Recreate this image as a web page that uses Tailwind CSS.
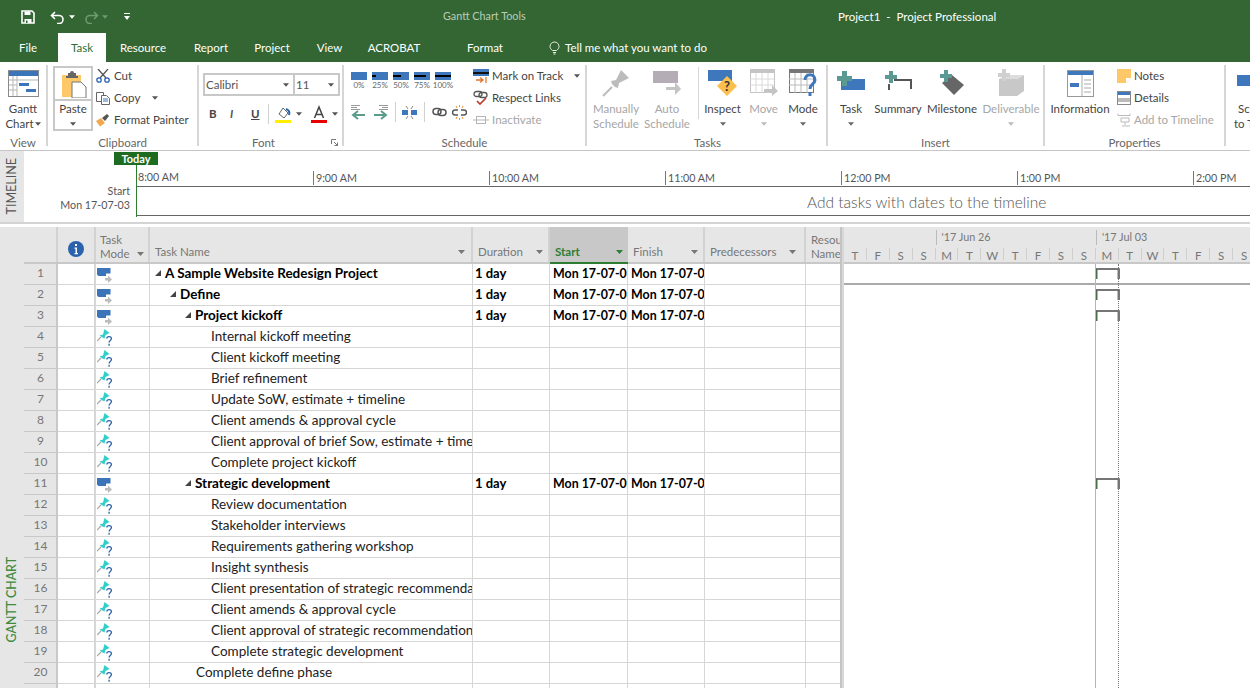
<!DOCTYPE html>
<html lang="en">
<head>
    <meta charset="UTF-8">
    <title>Project1 - Project Professional</title>
    <script src="https://cdn.jsdelivr.net/npm/@tailwindcss/browser@4"></script>
</head>
<body class="w-[1250px] h-[688px] overflow-hidden bg-white text-[#444] text-[11.500px] [font-family:Lato,'Liberation_Sans',sans-serif]">

    <!-- shared icons -->
    <svg class="hidden">
        <symbol id="caret" viewBox="0 0 7 4"><path d="M0 0h7L3.500 4z"/></symbol>
        <symbol id="auto-mode" viewBox="0 0 16 15"><path d="M0 0h13.500v5.500H9V8H1.500L0 6.500z" fill="#3b74b8"/><path d="M8 10h3V7.500l4 4-4 3.500v-2.500H8z" fill="#bcbcbc"/></symbol>
        <symbol id="pin-mode" viewBox="0 0 16 17"><path d="M0 12l4-4" stroke="#a8a8a8" stroke-width="1.200" fill="none"/><path d="M2.500 6.500L6 5.500 7.500 0l5 4-4 2-1 3.500-2-1z" fill="#2fd0cc"/><path d="M9.800 9.500c0-2.600 4.600-2.600 4.600 0 0 2-2.300 1.900-2.300 4" stroke="#fff" stroke-width="3" fill="none"/><path d="M9.800 9.500c0-2.600 4.600-2.600 4.600 0 0 2-2.300 1.900-2.300 4M12.100 14.800v2" stroke="#2b62ad" stroke-width="1.300" fill="none"/></symbol>
        <symbol id="tri" viewBox="0 0 6 6"><path d="M6 0v6H0z" fill="#444"/></symbol>
        <symbol id="bracket" viewBox="0 0 25 12"><path d="M1 11V1h23v10" fill="none" stroke="#4a4a4a" stroke-width="1.500"/><path d="M0 2h2.500v9H0z" fill="#4d6e4d"/><path d="M22.500 2H25v9h-2.500z" fill="#777"/></symbol>
    </svg>

    <!-- title bar + tabs -->
    <header class="h-[62px] bg-[#336633] text-white relative">
        <div class="h-[33px] flex items-center">
            <div class="flex items-center w-[440px] pl-[21px] gap-[3px]">
                <svg class="w-[14px] h-[14px]" viewBox="0 0 14 14"><path d="M1 1h10l2 2v10H1z" fill="none" stroke="#fff" stroke-width="1.600"/><path d="M3.500 1.500h6V5h-6zM3.500 9h7v4h-7z" fill="#fff"/><path d="M5 10.500h1.500V13H5z" fill="#336633"/></svg>
                <svg class="w-[16px] h-[14px] ml-[12px]" viewBox="0 0 16 14"><path d="M5 2L1.500 5.500 5 9M2 5.500h7a4 4 0 0 1 0 8H7" fill="none" stroke="#fff" stroke-width="1.600"/></svg>
                <svg class="w-[6px] h-[4px] fill-white"><use href="#caret"/></svg>
                <svg class="w-[16px] h-[14px] ml-[5px]" viewBox="0 0 16 14"><path d="M11 2l3.500 3.500L11 9M14 5.500H7a4 4 0 0 0 0 8h2" fill="none" stroke="#6f9a6f" stroke-width="1.600"/></svg>
                <svg class="w-[6px] h-[4px] fill-[#6f9a6f]"><use href="#caret"/></svg>
                <svg class="w-[6px] h-[8px] ml-[13px]" viewBox="0 0 6 8"><path d="M0 0h6v1H0zM0 3h6L3 7z" fill="#fff"/></svg>
            </div>
            <span class="text-[10.800px] text-[#b9ccb9] ml-[3px] w-[395px]">Gantt Chart Tools</span>
            <span class="text-[11.500px]">Project1&nbsp; -&nbsp; Project Professional</span>
        </div>
        <nav class="h-[29px] flex items-stretch text-[11.500px]">
            <a class="w-[58px] pl-[19px] leading-[30px]">File</a>
            <a class="w-[48px] text-center bg-white text-[#2f6e33] leading-[30px]">Task</a>
            <a class="w-[74px] text-center leading-[30px]">Resource</a>
            <a class="w-[62px] text-center leading-[30px]">Report</a>
            <a class="w-[60px] text-center leading-[30px]">Project</a>
            <a class="w-[55px] text-center leading-[30px]">View</a>
            <a class="w-[64px] ml-[5px] text-center leading-[30px]">ACROBAT</a>
            <a class="w-[41px] text-center leading-[30px]"></a>
            <a class="w-[36px] text-center leading-[30px]">Format</a>
            <div class="ml-[46px] flex items-center gap-[5px]">
                <svg class="w-[11px] h-[14px]" viewBox="0 0 11 14"><path d="M3.500 9.500C2 8.500 1 7 1 5.500a4.500 4.500 0 0 1 9 0c0 1.500-1 3-2.500 4zM4 11.500h3M4.500 13h2" fill="none" stroke="#e8f0e8"/></svg>
                <span>Tell me what you want to do</span>
            </div>
        </nav>
    </header>

    <!-- ribbon -->
    <section class="h-[89px] flex border-b border-[#c6c6c6]">

        <!-- View -->
        <div class="w-[48px] mt-[3px] mb-[4px] border-r-2 border-[#d6d6d6]">
            <div class="h-[70px] flex flex-col items-center">
                <div class="h-[36px] flex items-center">
                    <svg class="w-[31px] h-[27px]" viewBox="0 0 31 27"><rect x=".5" y=".5" width="30" height="26" fill="#fff" stroke="#8a8a8a"/><path d="M1 1h29v5H1z" fill="#3b74b8"/><path d="M1 10h8M1 15h8M1 20h8M5 6v20M9 6v20M9 10h21" stroke="#b5b5b5" fill="none"/><path d="M11 13h10v3H11zM18 19h10v3H18z" fill="#3b74b8"/></svg>
                </div>
                <span class="leading-[15px]">Gantt</span>
                <span class="leading-[15px] flex items-center gap-[1px]">Chart<svg class="w-[6px] h-[4px] fill-[#555]"><use href="#caret"/></svg></span>
            </div>
            <div class="h-[12px] leading-[16px] text-center text-[#666]">View</div>
        </div>

        <!-- Clipboard -->
        <div class="w-[151px] mt-[3px] mb-[4px] border-r-2 border-[#d6d6d6]">
            <div class="h-[70px] flex">
                <div class="w-[40px] ml-[5px] h-[65px] mt-[1px] flex flex-col border-2 border-[#c8c8c8]">
                    <div class="h-[33px] flex justify-center items-center border-b-2 border-[#c8c8c8]">
                        <svg class="w-[28px] h-[28px]" viewBox="0 0 28 28"><path d="M3 5h19v22H3z" fill="#fdc868"/><path d="M9 3h2a2 2 0 0 1 4 0h2v3h2v2H7V6h2z" fill="#666"/><path d="M13 12h9l5 5v11H13z" fill="#fff" stroke="#777"/></svg>
                    </div>
                    <div class="flex flex-col items-center leading-[15px]">
                        <span>Paste</span>
                        <svg class="w-[6px] h-[4px] fill-[#555] mt-[6px]"><use href="#caret"/></svg>
                    </div>
                </div>
                <div class="ml-[3px] flex flex-col">
                    <div class="h-[22px] flex items-center gap-[4px]">
                        <svg class="w-[14px] h-[14px]" viewBox="0 0 14 14"><path d="M2 0l8 9M12 0L4 9" stroke="#555" stroke-width="1.300" fill="none"/><circle cx="3" cy="11" r="2.200" fill="none" stroke="#2b62ad" stroke-width="1.300"/><circle cx="11" cy="11" r="2.200" fill="none" stroke="#2b62ad" stroke-width="1.300"/></svg>
                        <span>Cut</span>
                    </div>
                    <div class="h-[22px] flex items-center gap-[4px]">
                        <svg class="w-[14px] h-[14px]" viewBox="0 0 14 14"><path d="M.5 1.500h7v9h-7z" fill="#fff" stroke="#666"/><path d="M5.500 4.500h5l3 3v6h-8z" fill="#fff" stroke="#666"/><path d="M7 8h5M7 10h5" stroke="#3b74b8"/></svg>
                        <span>Copy</span>
                        <svg class="w-[6px] h-[4px] fill-[#555] ml-[8px]"><use href="#caret"/></svg>
                    </div>
                    <div class="h-[22px] flex items-center gap-[4px]">
                        <svg class="w-[14px] h-[14px]" viewBox="0 0 14 14"><path d="M0 8l5-3 4 5-5 3.500z" fill="#f0a94e"/><path d="M6 5l5-4 2 2-4 5z" fill="#555"/></svg>
                        <span>Format Painter</span>
                    </div>
                </div>
            </div>
            <div class="h-[12px] leading-[16px] text-center text-[#666]">Clipboard</div>
        </div>

        <!-- Font -->
        <div class="w-[145px] mt-[3px] mb-[4px] border-r-2 border-[#d6d6d6] relative">
            <div class="h-[70px] pl-[4px] pt-[8px]">
                <div class="w-[137px] h-[23px] flex border-2 border-[#c8c8c8] text-[#555]">
                    <div class="w-[90px] flex items-center justify-between pl-[1px] pr-[4px] border-r-2 border-[#c8c8c8]">Calibri<svg class="w-[6px] h-[4px] fill-[#555]"><use href="#caret"/></svg></div>
                    <div class="flex-1 flex items-center justify-between pl-[1px] pr-[4px]">11<svg class="w-[6px] h-[4px] fill-[#555]"><use href="#caret"/></svg></div>
                </div>
                <div class="flex items-center mt-[6px] h-[24px] pl-[6px] text-[#444]">
                    <span class="w-[21px] font-bold">B</span>
                    <span class="w-[21px] italic font-bold text-[#555]">I</span>
                    <span class="w-[17px] underline font-bold">U</span>
                    <span class="w-[1px] h-[20px] bg-[#d0d0d0] mr-[6px]"></span>
                    <svg class="w-[16px] h-[18px]" viewBox="0 0 16 18"><path d="M4 9l4-6 5 5-4 5z" fill="#fff" stroke="#666"/><path d="M11 4c3 1 4 3 3 6" fill="none" stroke="#2b62ad" stroke-width="2"/><path d="M0 15h16v3H0z" fill="#ffee00"/></svg>
                    <svg class="w-[6px] h-[4px] fill-[#555] ml-[5px]"><use href="#caret"/></svg>
                    <svg class="w-[16px] h-[18px] ml-[9px]" viewBox="0 0 16 18"><path d="M3.500 13L8 2l4.500 11M5 9.500h6" fill="none" stroke="#444" stroke-width="1.500"/><path d="M0 15h16v3H0z" fill="#e60000"/></svg>
                    <svg class="w-[6px] h-[4px] fill-[#555] ml-[5px]"><use href="#caret"/></svg>
                </div>
            </div>
            <div class="h-[12px] leading-[16px] text-center pr-[14px] text-[#666]">Font</div>
            <svg class="absolute right-[4px] bottom-[0px] w-[7px] h-[7px]" viewBox="0 0 7 7"><path d="M.5 5V.5H5M3 3l3.500 3.500M6.500 3.500v3h-3" fill="none" stroke="#777"/></svg>
        </div>

        <!-- Schedule -->
        <div class="w-[243px] mt-[3px] mb-[4px] border-r-2 border-[#d6d6d6]">
            <div class="h-[70px] flex">
                <div class="w-[129px] pl-[7px]">
                    <div class="flex gap-[5px] mt-[7px]">
                        <div class="w-[16px] flex flex-col items-center">
                            <div class="w-[16px] h-[8px] bg-[#3f77bd]"></div>
                            <span class="text-[8px] leading-[11px] text-[#666]">0%</span>
                        </div>
                        <div class="w-[16px] flex flex-col items-center">
                            <div class="w-[16px] h-[8px] bg-[#3f77bd] flex items-center"><div class="w-[4px] h-[2px] bg-black"></div></div>
                            <span class="text-[8px] leading-[11px] text-[#666]">25%</span>
                        </div>
                        <div class="w-[16px] flex flex-col items-center">
                            <div class="w-[16px] h-[8px] bg-[#3f77bd] flex items-center"><div class="w-[8px] h-[2px] bg-black"></div></div>
                            <span class="text-[8px] leading-[11px] text-[#666]">50%</span>
                        </div>
                        <div class="w-[16px] flex flex-col items-center">
                            <div class="w-[16px] h-[8px] bg-[#3f77bd] flex items-center"><div class="w-[12px] h-[2px] bg-black"></div></div>
                            <span class="text-[8px] leading-[11px] text-[#666]">75%</span>
                        </div>
                        <div class="w-[16px] flex flex-col items-center">
                            <div class="w-[16px] h-[8px] bg-[#3f77bd] flex items-center"><div class="w-[16px] h-[2px] bg-black"></div></div>
                            <span class="text-[8px] leading-[11px] text-[#666]">100%</span>
                        </div>
                    </div>
                    <div class="flex items-center mt-[11px] h-[20px]">
                        <svg class="w-[16px] h-[15px]" viewBox="0 0 16 15"><path d="M0 .5h9M0 2.500h6M0 4.500h9" stroke="#999"/><path d="M7 6L2 10l5 4M2 10h12" fill="none" stroke="#5a9c8c" stroke-width="2"/></svg>
                        <svg class="w-[16px] h-[15px] ml-[5px]" viewBox="0 0 16 15"><path d="M16 .5H7M16 2.500h-6M16 4.500H7" stroke="#999"/><path d="M9 6l5 4-5 4M14 10H2" fill="none" stroke="#5a9c8c" stroke-width="2"/></svg>
                        <span class="w-[1px] h-[20px] bg-[#d0d0d0] ml-[7px]"></span>
                        <svg class="w-[15px] h-[15px] ml-[6px]" viewBox="0 0 15 15"><path d="M0 5h6v5H0zM9 5h6v5H9z" fill="#3f77bd"/><path d="M4 1l2 3M11 1L9 4M4 14l2-3M11 14l-2-3" stroke="#888"/></svg>
                        <span class="w-[1px] h-[20px] bg-[#d0d0d0] ml-[7px]"></span>
                        <svg class="w-[15px] h-[10px] ml-[7px]" viewBox="0 0 15 10"><rect x="1" y="1.500" width="8" height="6" rx="3" fill="none" stroke="#555" stroke-width="1.500"/><rect x="6" y="2.500" width="8" height="6" rx="3" fill="none" stroke="#555" stroke-width="1.500"/></svg>
                        <svg class="w-[15px] h-[15px] ml-[5px]" viewBox="0 0 15 15"><path d="M6 5H3a2.500 2.500 0 0 0 0 5h3M9 5h3a2.500 2.500 0 0 1 0 5H9" fill="none" stroke="#555" stroke-width="1.500"/><path d="M4 1l1 2M11 1l-1 2M7.500 0v2M4 14l1-2M11 14l-1-2M7.500 15v-2" stroke="#e8922e"/></svg>
                    </div>
                </div>
                <div class="flex flex-col">
                    <div class="h-[22px] flex items-center gap-[3px]">
                        <svg class="w-[16px] h-[16px]" viewBox="0 0 16 16"><path d="M0 1h16v7H0z" fill="#3f77bd"/><path d="M0 4h16v2H0z" fill="#111"/><path d="M3 12h7M7 9.500l3 2.500-3 2.500M13 9v6" fill="none" stroke="#e0762a" stroke-width="1.300"/></svg>
                        <span>Mark on Track</span>
                        <svg class="w-[6px] h-[4px] fill-[#555] ml-[8px]"><use href="#caret"/></svg>
                    </div>
                    <div class="h-[22px] flex items-center gap-[3px]">
                        <svg class="w-[16px] h-[16px]" viewBox="0 0 16 16"><rect x="1" y="1.500" width="8" height="5" rx="2.500" fill="none" stroke="#555" stroke-width="1.300"/><rect x="6" y="2.500" width="8" height="5" rx="2.500" fill="none" stroke="#555" stroke-width="1.300"/><path d="M4 11l3 3 6-6" fill="none" stroke="#c0392b" stroke-width="1.700"/></svg>
                        <span>Respect Links</span>
                    </div>
                    <div class="h-[22px] flex items-center gap-[3px] text-[#a6a6a6]">
                        <svg class="w-[16px] h-[10px] mx-0" viewBox="0 0 16 10"><rect x="3.500" y="1.500" width="9" height="7" fill="none" stroke="#b5b5b5"/><path d="M0 5h16" stroke="#b5b5b5"/></svg>
                        <span>Inactivate</span>
                    </div>
                </div>
            </div>
            <div class="h-[12px] leading-[16px] text-center text-[#666]">Schedule</div>
        </div>

        <!-- Tasks -->
        <div class="w-[241px] mt-[3px] mb-[4px] border-r-2 border-[#d6d6d6]">
            <div class="h-[70px] flex">
                <div class="w-[58px] flex flex-col items-center text-[#a6a6a6]">
                    <div class="h-[36px] flex items-center">
                        <svg class="w-[28px] h-[28px]" viewBox="0 0 28 28"><path d="M1 27l9-9" stroke="#bbb" stroke-width="2"/><path d="M9 12l5-1 5-10 8 8-10 5-1 5-3-1-3-3z" fill="#bcbcbc"/></svg>
                    </div>
                    <span class="leading-[15px]">Manually</span>
                    <span class="leading-[15px]">Schedule</span>
                </div>
                <div class="w-[44px] flex flex-col items-center text-[#a6a6a6]">
                    <div class="h-[36px] flex items-center">
                        <svg class="w-[28px] h-[26px]" viewBox="0 0 28 26"><path d="M0 1h25v12H0z" fill="#b5adb5"/><path d="M13 17h9v-5l6 7-6 6v-5h-9z" fill="#c4c4c4"/></svg>
                    </div>
                    <span class="leading-[15px]">Auto</span>
                    <span class="leading-[15px]">Schedule</span>
                </div>
                <span class="w-[1px] h-[52px] bg-[#d6d6d6] ml-[9px] mt-[2px]"></span>
                <div class="w-[47px] flex flex-col items-center">
                    <div class="h-[36px] flex items-center">
                        <svg class="w-[30px] h-[28px]" viewBox="0 0 30 28"><path d="M0 1h24v11H0z" fill="#3f77bd"/><path d="M19 7l10 10-10 10L9 17z" fill="#fbbf4d"/><text x="19" y="22" font-size="13" font-weight="bold" text-anchor="middle" fill="#333" font-family="Lato">?</text></svg>
                    </div>
                    <span class="leading-[15px]">Inspect</span>
                    <svg class="w-[6px] h-[4px] fill-[#666] mt-[6px]"><use href="#caret"/></svg>
                </div>
                <div class="w-[35px] flex flex-col items-center text-[#a6a6a6]">
                    <div class="h-[36px] flex items-center">
                        <svg class="w-[28px] h-[28px]" viewBox="0 0 28 28"><rect x=".5" y=".5" width="24" height="23" fill="#fff" stroke="#c4c4c4"/><path d="M1 1h23v3H1z" fill="#c4c4c4"/><path d="M0 10h24M0 16h24M6 4v20M12 4v20M18 4v20" stroke="#dadada"/><path d="M14 20h8v-4l6 6-6 5v-4h-8z" fill="#c4c4c4"/></svg>
                    </div>
                    <span class="leading-[15px]">Move</span>
                    <svg class="w-[6px] h-[4px] fill-[#bbb] mt-[6px]"><use href="#caret"/></svg>
                </div>
                <div class="w-[42px] ml-[1px] flex flex-col items-center">
                    <div class="h-[36px] flex items-center">
                        <svg class="w-[28px] h-[28px]" viewBox="0 0 28 28"><rect x=".5" y=".5" width="24" height="23" fill="#fff" stroke="#777"/><path d="M1 1h23v3H1z" fill="#777"/><path d="M0 10h24M0 16h24M6 4v20M12 4v20M18 4v20" stroke="#bbb"/><path d="M16 11c0-7 10-7 10 0 0 4-5 4-5 9M21 23v4" fill="none" stroke="#3f77bd" stroke-width="3"/></svg>
                    </div>
                    <span class="leading-[15px]">Mode</span>
                    <svg class="w-[6px] h-[4px] fill-[#666] mt-[6px]"><use href="#caret"/></svg>
                </div>
            </div>
            <div class="h-[12px] leading-[16px] text-left pl-[107px] text-[#666]">Tasks</div>
        </div>

        <!-- Insert -->
        <div class="w-[217px] mt-[3px] mb-[4px] border-r-2 border-[#d6d6d6]">
            <div class="h-[70px] flex">
                <div class="w-[46px] flex flex-col items-center">
                    <div class="h-[36px] flex items-center">
                        <svg class="w-[28px] h-[24px]" viewBox="0 0 28 24"><path d="M4 8h24v11H4z" fill="#3f77bd"/><path d="M5 0h5v5h5v5h-5v5H5v-5H0V5h5z" fill="#5b9a92"/></svg>
                    </div>
                    <span class="leading-[15px]">Task</span>
                    <svg class="w-[6px] h-[4px] fill-[#666] mt-[6px]"><use href="#caret"/></svg>
                </div>
                <div class="w-[50px] -ml-[1px] flex flex-col items-center">
                    <div class="h-[36px] flex items-center">
                        <svg class="w-[28px] h-[24px]" viewBox="0 0 28 24"><path d="M5 0h4v4h4v4H9v4H5V8H1V4h4z" fill="#5b9a92"/><path d="M5 13v6M10 9h17v9" fill="none" stroke="#555" stroke-width="2"/></svg>
                    </div>
                    <span class="leading-[15px]">Summary</span>
                </div>
                <div class="w-[56px] flex flex-col items-center ml-[1px]">
                    <div class="h-[36px] flex items-center">
                        <svg class="w-[26px] h-[26px]" viewBox="0 0 26 26"><path d="M13 5l12 10-10 10L3 13z" fill="#666"/><path d="M5 0h4v4h4v4H9v4H5V8H1V4h4z" fill="#5b9a92"/></svg>
                    </div>
                    <span class="leading-[15px]">Milestone</span>
                </div>
                <div class="w-[60px] ml-[1px] flex flex-col items-center text-[#a6a6a6]">
                    <div class="h-[36px] flex items-center">
                        <svg class="w-[28px] h-[28px]" viewBox="0 0 28 28"><path d="M2 10h18v17H2zM20 10l7-4v16l-7 5z" fill="#c8c8c8"/><path d="M2 10l7-4h18l-7 4z" fill="#dcdcdc"/><path d="M5 0h4v4h4v4H9v4H5V8H1V4h4z" fill="#d0d0d0"/></svg>
                    </div>
                    <span class="leading-[15px]">Deliverable</span>
                    <svg class="w-[6px] h-[4px] fill-[#bbb] mt-[6px]"><use href="#caret"/></svg>
                </div>
            </div>
            <div class="h-[12px] leading-[16px] text-center text-[#666]">Insert</div>
        </div>

        <!-- Properties -->
        <div class="w-[181px] mt-[3px] mb-[4px] border-r-2 border-[#d6d6d6]">
            <div class="h-[70px] flex">
                <div class="w-[70px] flex flex-col items-center">
                    <div class="h-[36px] flex items-center">
                        <svg class="w-[27px] h-[27px]" viewBox="0 0 27 27"><rect x=".5" y=".5" width="26" height="26" fill="#fff" stroke="#999"/><path d="M1 1h25v4H1z" fill="#3f77bd"/><path d="M3 13h9v4H3z" fill="#3f77bd"/><path d="M15 5v21M17 10h7M17 14h7M17 18h7M17 22h7" stroke="#aaa"/></svg>
                    </div>
                    <span class="leading-[15px]">Information</span>
                </div>
                <div class="ml-[2px] flex flex-col">
                    <div class="h-[22px] flex items-center gap-[3px]">
                        <svg class="w-[14px] h-[14px]" viewBox="0 0 14 14"><path d="M0 0h14v9l-5 5H0z" fill="#fdc868"/><path d="M14 9H9v5z" fill="#fff"/></svg>
                        <span>Notes</span>
                    </div>
                    <div class="h-[22px] flex items-center gap-[3px]">
                        <svg class="w-[14px] h-[14px]" viewBox="0 0 14 14"><rect x=".5" y=".5" width="13" height="13" fill="#fff" stroke="#888"/><path d="M1 1h12v3H1z" fill="#3f77bd"/><path d="M1 7h12v4H1z" fill="#bbb"/></svg>
                        <span>Details</span>
                    </div>
                    <div class="h-[22px] flex items-center gap-[3px] text-[#a6a6a6]">
                        <svg class="w-[14px] h-[14px]" viewBox="0 0 14 14"><path d="M1 .5v2h12v-2M4 5h8v4H4zM8 9v3M5 13h8" fill="none" stroke="#bbb"/></svg>
                        <span>Add to Timeline</span>
                    </div>
                </div>
            </div>
            <div class="h-[12px] leading-[16px] text-center text-[#666]">Properties</div>
        </div>

        <!-- cut off group at the right edge -->
        <div class="flex-1 overflow-hidden mt-[3px] pl-[11px]">
            <div class="h-[36px] flex items-center"><div class="w-[20px] h-[11px] bg-[#3f77bd] shrink-0 mb-[6px]"></div></div>
            <div class="leading-[15px] whitespace-nowrap text-center w-[20px]">Sch</div>
            <div class="leading-[15px] whitespace-nowrap -ml-[3px]">to Tim</div>
        </div>
    </section>

    <!-- timeline -->
    <section class="h-[73px] flex border-b-2 border-[#d4d4d4] relative">
        <div class="w-[24px] bg-[#e6e6e6] flex items-center justify-center">
            <span class="[writing-mode:vertical-rl] rotate-180 text-[12.500px] text-[#555]">TIMELINE</span>
        </div>
        <div class="w-[112px] pt-[33px] pr-[6px] text-right text-[#555] text-[10.700px] leading-[14px]">
            <div>Start</div>
            <div>Mon 17-07-03</div>
        </div>
        <div class="flex-1 overflow-hidden">
            <div class="h-[36px] flex items-end border-b border-[#666] text-[#555] text-[10.700px] leading-[14px] pb-[1px]">
                <div class="w-[177px] shrink-0 pl-[2px] h-[16px] pt-[1px]">8:00 AM</div>
                <div class="w-[176px] shrink-0 pl-[2px] h-[14px] border-l border-[#777]">9:00 AM</div>
                <div class="w-[176px] shrink-0 pl-[2px] h-[14px] border-l border-[#777]">10:00 AM</div>
                <div class="w-[176px] shrink-0 pl-[2px] h-[14px] border-l border-[#777]">11:00 AM</div>
                <div class="w-[176px] shrink-0 pl-[2px] h-[14px] border-l border-[#777]">12:00 PM</div>
                <div class="w-[176px] shrink-0 pl-[2px] h-[14px] border-l border-[#777]">1:00 PM</div>
                <div class="w-[176px] shrink-0 pl-[2px] h-[14px] border-l border-[#777]">2:00 PM</div>
            </div>
            <div class="h-[29px] border-b border-[#666] pl-[671px] text-[15.500px] font-light text-[#555] leading-[30px] whitespace-nowrap">Add tasks with dates to the timeline</div>
        </div>
        <!-- today marker -->
        <div class="absolute left-[136px] top-[13px] w-[1px] h-[53px] bg-[#2e7d32]"></div>
        <div class="absolute left-[114px] top-[1px] w-[44px] h-[13px] bg-[#1e6b22] text-white font-bold text-[11px] leading-[13px] text-center">Today</div>
    </section>

    <div class="h-[3px]"></div>

    <!-- task table + gantt -->
    <section class="h-[461px] flex overflow-hidden relative">
        <div class="w-[24px] bg-[#e6e6e6] flex items-end justify-center pb-[46px]">
            <span class="[writing-mode:vertical-rl] rotate-180 text-[12.400px] font-medium text-[#3f8a3f]">GANTT CHART</span>
        </div>

        <div class="w-[816px] shrink-0">
            <div class="h-[37px] grid grid-cols-[34px_38px_54px_323px_77px_78px_77px_101px_34px] bg-[#e6e6e6] border-b-2 border-[#c8c8c8] text-[#777] text-[11.500px] leading-[14px]">
                <div class="border-r-2 border-[#d2d2d2]"></div>
                <div class="border-r-2 border-[#d2d2d2] flex items-center justify-center pt-[8px]">
                    <svg class="w-[16px] h-[16px]" viewBox="0 0 16 16"><circle cx="8" cy="8" r="8" fill="#2b62ad"/><path d="M7 3h2v2H7zM6.500 6.500H9V12h1v1.200H6.500V12h1V7.700h-1z" fill="#fff"/></svg>
                </div>
                <div class="border-r-2 border-[#d2d2d2] pl-[4px] pt-[6px]">
                    <div>Task</div>
                    <div class="flex items-center">Mode<svg class="w-[7px] h-[4px] fill-[#777] ml-[7px]"><use href="#caret"/></svg></div>
                </div>
                <div class="border-r-2 border-[#d2d2d2] pl-[5px] pr-[6px] flex items-center justify-between pt-[14px]">Task Name<svg class="w-[7px] h-[4px] fill-[#777]"><use href="#caret"/></svg></div>
                <div class="border-r-2 border-[#d2d2d2] pl-[5px] pr-[5px] flex items-center justify-between pt-[14px]">Duration<svg class="w-[7px] h-[4px] fill-[#777]"><use href="#caret"/></svg></div>
                <div class="bg-[#c8c8c8] border-b-2 border-[#2e7d32] -mb-[2px] pl-[5px] pr-[5px] flex items-center justify-between pt-[14px] text-[#2e7d32] font-bold">Start<svg class="w-[7px] h-[4px] fill-[#2e7d32]"><use href="#caret"/></svg></div>
                <div class="border-r-2 border-[#d2d2d2] pl-[5px] pr-[5px] flex items-center justify-between pt-[14px]">Finish<svg class="w-[7px] h-[4px] fill-[#777]"><use href="#caret"/></svg></div>
                <div class="border-r-2 border-[#d2d2d2] pl-[5px] pr-[8px] flex items-center justify-between pt-[14px]">Predecessors<svg class="w-[7px] h-[4px] fill-[#777]"><use href="#caret"/></svg></div>
                <div class="pl-[5px] pt-[6px] overflow-hidden whitespace-nowrap">
                    <div>Resource</div>
                    <div>Names</div>
                </div>
            </div>
            <div id="rows"></div>
        </div>

        <div class="w-[4px] bg-[#d8d8d8] border-l-2 border-[#c4c4c4]"></div>

        <div class="flex-1 overflow-hidden">
            <div class="h-[37px] bg-[#e6e6e6] border-b-2 border-[#c8c8c8] text-[#777] text-[11.500px]">
                <div class="h-[18px] flex items-end leading-[14px] text-[10.800px]">
                    <div class="w-[91.600px] shrink-0"></div>
                    <div class="w-[160.300px] shrink-0 h-[15px] border-l border-[#bbb] pl-[5px]">'17 Jun 26</div>
                    <div class="h-[15px] border-l border-[#bbb] pl-[5px]">'17 Jul 03</div>
                </div>
                <div id="days" class="h-[17px] flex leading-[15px]"></div>
            </div>
            <div id="gantt"></div>
        </div>

        <!-- today and status date lines run over the chart -->
        <div class="absolute left-[1095px] top-[37px] bottom-0 w-[1px] bg-[#9cc79c]"></div>
        <div class="absolute left-[1118px] top-[37px] bottom-0 w-0 border-l border-dotted border-[#777]"></div>
    </section>

    <script>
        // level: 0-3 indent, bold rows are the summary tasks
        const tasks = [
            ['A Sample Website Redesign Project', 0, true],
            ['Define', 1, true],
            ['Project kickoff', 2, true],
            ['Internal kickoff meeting', 3],
            ['Client kickoff meeting', 3],
            ['Brief refinement', 3],
            ['Update SoW, estimate + timeline', 3],
            ['Client amends & approval cycle', 3],
            ['Client approval of brief Sow, estimate + timeline', 3],
            ['Complete project kickoff', 3],
            ['Strategic development', 2, true],
            ['Review documentation', 3],
            ['Stakeholder interviews', 3],
            ['Requirements gathering workshop', 3],
            ['Insight synthesis', 3],
            ['Client presentation of strategic recommendations', 3],
            ['Client amends & approval cycle', 3],
            ['Client approval of strategic recommendations', 3],
            ['Complete strategic development', 3],
            ['Complete define phase', 2],
            ['', 3]
        ];
        const indents = ['pl-[15px]', 'pl-[31px]', 'pl-[46px]', 'pl-[61px]'];
        const triIndents = ['pl-[5px]', 'pl-[20px]', 'pl-[35px]', 'pl-[50px]'];
        const cell = 'border-r border-[#d6d6d6] border-b overflow-hidden whitespace-nowrap';

        document.getElementById('rows').innerHTML = tasks.map((t, i) => {
            const name = t[0], level = t[1], bold = t[2];
            const weight = bold ? 'font-bold text-black' : 'text-[#222]';
            const sum = bold ? 'Mon 17-07-03' : '';
            const tri = bold ? '<svg class="w-[6px] h-[6px] mr-[4px] shrink-0"><use href="#tri"/></svg>' : '';
            const icon = !name ? '' : bold
                ? '<svg class="w-[16px] h-[15px] mt-[4px]"><use href="#auto-mode"/></svg>'
                : '<svg class="w-[16px] h-[17px] mt-[2px]"><use href="#pin-mode"/></svg>';
            return `<div class="h-[21px] grid grid-cols-[34px_38px_54px_323px_77px_78px_77px_101px_34px] text-[13.500px] leading-[18px] ${weight}">
                <div class="bg-[#e6e6e6] border-r-2 border-b border-[#c8c8c8] text-[#777] text-[12px] font-normal text-center pl-[1px]">${i < 20 ? i + 1 : ''}</div>
                <div class="border-r-2 border-b border-[#d6d6d6]"></div>
                <div class="${cell} pl-[1px] flex items-start">${icon}</div>
                <div class="${cell} flex items-center pb-[2px] ${bold ? triIndents[level] : indents[level]}">${tri}${name.replace('&', '&amp;')}</div>
                <div class="${cell} pl-[2px] text-[13px]">${bold ? '1 day' : ''}</div>
                <div class="${cell} pl-[3px] text-[12.400px] leading-[19px]">${sum}</div>
                <div class="${cell} pl-[3px] text-[12.400px] leading-[19px]">${sum}</div>
                <div class="${cell}"></div>
                <div class="border-b border-[#d6d6d6]"></div>
            </div>`;
        }).join('');

        document.getElementById('days').innerHTML = 'TFSSMTWTFSSMTWTFSS'.split('').map(d =>
            `<div class="w-[22.900px] shrink-0 text-center border-r border-[#cfcfcf] h-[12px] mt-[3px]">${d}</div>`
        ).join('');

        document.getElementById('gantt').innerHTML = tasks.map((t, i) => {
            const bar = t[2] ? '<svg class="absolute left-[251px] top-[4px] w-[25px] h-[12px]"><use href="#bracket"/></svg>' : '';
            return `<div class="h-[21px] relative ${i == 0 ? 'border-b-2 border-[#aaa]' : ''}">${bar}</div>`;
        }).join('');
    </script>
</body>
</html>
